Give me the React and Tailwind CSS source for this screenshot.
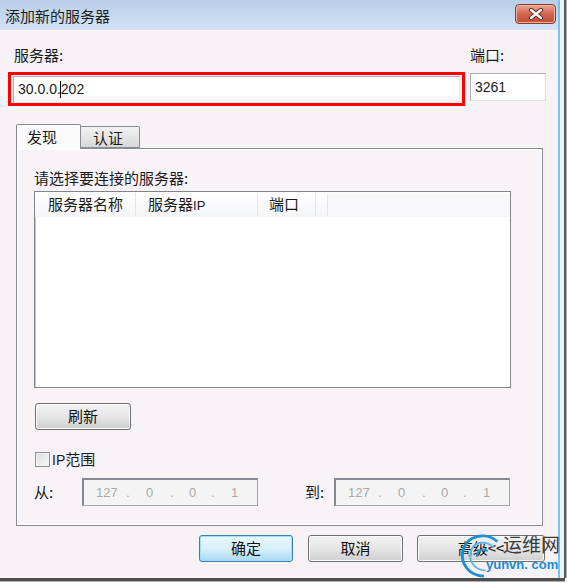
import React from 'react'

const cjk = "font-['Noto_Sans_CJK_SC','Noto_Sans',sans-serif]"
const latin = "font-['Liberation_Sans','Noto_Sans_CJK_SC',sans-serif]"

function Win7Button({ label, width, focused }) {
  return (
    <div
      className={`h-[27px] ${width} rounded-[3px] border flex items-center justify-center text-[15px] text-[#111] ${cjk} ${
        focused
          ? 'border-[#3c7fb1] shadow-[inset_0_0_0_1px_#9ee2f8] bg-gradient-to-b from-[#eaf6fd] via-[#d9f0fc] to-[#a7d9f5]'
          : 'border-[#707070] shadow-[inset_0_0_0_1px_#fbfbfb] bg-gradient-to-b from-[#f2f2f2] via-[#e6e6e6] to-[#cfcfcf]'
      }`}
    >
      {label}
    </div>
  )
}

function IpBox() {
  return (
    <div className={`w-[176px] h-[28px] border border-[#a7a7a7] border-t-[#828790] border-l-[#828790] border-t-2 border-l-2 bg-[#f4f4f4] flex items-center text-[13px] text-[#a9a9a9] ${latin}`}>
      <span className="ml-[12px] w-[30px]">127</span>
      <span className="w-[20px]">.</span>
      <span className="w-[24px]">0</span>
      <span className="w-[19px]">.</span>
      <span className="w-[22px]">0</span>
      <span className="w-[20px]">.</span>
      <span>1</span>
    </div>
  )
}

export default function App() {
  return (
    <div className="w-[567px] h-[583px] bg-white overflow-hidden">
      <div className="flex">
        <div className="w-[558px] h-[578px] bg-[#f6f2f6] flex flex-col">
          {/* Title bar */}
          <div className="h-[30px] bg-gradient-to-b from-[#b8cfe9] to-[#d2e2f3] flex items-start justify-between">
            <span className={`ml-[5px] mt-[5px] text-[15px] text-[#1e1e1e] ${cjk}`}>添加新的服务器</span>
            <div className="mt-[4px] mr-[2px] w-[41px] h-[20px] rounded-[4px] border border-[#8a3a2c] bg-gradient-to-b from-[#e9a594] via-[#d4644c] to-[#c14f36] shadow-[inset_0_0_0_1px_#f0b4a4] flex items-center justify-center">
              <svg width="16" height="12" viewBox="0 0 16 12">
                <path d="M3 2 L13 10 M13 2 L3 10" stroke="#5a2a22" strokeWidth="4.2" strokeLinecap="round" />
                <path d="M3 2 L13 10 M13 2 L3 10" stroke="#ffffff" strokeWidth="2.4" strokeLinecap="round" />
              </svg>
            </div>
          </div>

          {/* Server / port labels */}
          <div className={`mt-[16px] h-[18px] flex items-center text-[15px] text-[#1a1a1a] ${cjk}`}>
            <span className="ml-[14px] w-[456px]">服务器:</span>
            <span>端口:</span>
          </div>

          {/* Inputs */}
          <div className="mt-[8px] flex items-start">
            <div className="ml-[8px] w-[457px] h-[34px] border-[3px] border-[#ff0000] px-[2px] pt-[1px]">
              <div className={`h-[27px] bg-white border border-[#abadb3] border-r-[#e3e9ef] border-b-[#e3e9ef] flex items-center pl-[4px] text-[14px] text-[#1a1a1a] ${latin}`}>
                30.0.0.<span className="inline-block w-[1px] h-[17px] bg-black -ml-[1px]"></span>202
              </div>
            </div>
            <div className={`ml-[5px] mt-[1px] w-[76px] h-[28px] bg-white border border-[#abadb3] border-r-[#dbdfe6] border-b-[#dbdfe6] flex items-center pl-[4px] text-[14px] text-[#1a1a1a] ${latin}`}>
              3261
            </div>
          </div>

          {/* Tabs */}
          <div className={`mt-[17px] ml-[16px] flex items-end h-[25px] text-[15px] text-[#1a1a1a] ${cjk}`}>
            <div className="relative z-10 w-[65px] h-[25px] -mb-[1px] border border-b-0 border-[#898c95] bg-[#fbfbfc] rounded-t-[2px] pl-[10px] leading-[24px]">
              发现
            </div>
            <div className="w-[59px] h-[22px] border border-l-0 border-[#898c95] bg-gradient-to-b from-[#f2f2f2] to-[#d8d8d8] rounded-tr-[2px] pl-[12px] leading-[21px]">
              认证
            </div>
          </div>

          {/* Tab panel */}
          <div className={`ml-[16px] w-[527px] h-[378px] border border-[#898c95] shadow-[inset_0_0_0_1px_#ffffff] bg-[#f7f3f7] pl-[17px] text-[15px] text-[#1a1a1a] ${cjk}`}>
            <div className="mt-[20px] h-[18px] leading-[18px]">请选择要连接的服务器:</div>

            {/* List view */}
            <div className="mt-[4px] w-[477px] h-[197px] border border-[#82848a] bg-white shadow-[inset_1px_1px_0_#c9cbd0]">
              <div className="h-[25px] flex items-center bg-gradient-to-b from-white to-[#f4f5f8]">
                <div className="w-[101px] pl-[13px] border-r border-[#e5e6ea]">服务器名称</div>
                <div className="w-[122px] pl-[12px] border-r border-[#e5e6ea]">
                  服务器<span className={`${latin} text-[13px]`}>IP</span>
                </div>
                <div className="w-[58px] pl-[11px] border-r border-[#e5e6ea]">端口</div>
                <div className="w-[12px] h-[22px] border-r border-[#e5e6ea]"></div>
                <div className="flex-1 h-[22px] bg-[#f8f8fb]"></div>
              </div>
            </div>

            <div className="mt-[15px] ml-[1px]">
              <Win7Button label="刷新" width="w-[96px]" />
            </div>

            {/* IP range */}
            <div className="mt-[21px] ml-[1px] flex items-center h-[16px]">
              <div className="w-[15px] h-[15px] border border-[#8e8f8f] bg-gradient-to-br from-[#dcdcdc] to-[#f8f8f8] shadow-[inset_0_0_0_1px_#f4f4f4]"></div>
              <span className="ml-[2px]">
                <span className={`${latin} text-[14px]`}>IP</span>范围
              </span>
            </div>

            <div className="mt-[11px] flex items-center">
              <span className="w-[48px]">从:</span>
              <IpBox />
              <span className="ml-[47px] w-[29px]">到:</span>
              <IpBox />
            </div>
          </div>

          {/* Bottom buttons */}
          <div className="mt-[9px] flex items-center relative">
            <div className="ml-[199px]">
              <Win7Button label="确定" width="w-[94px]" focused />
            </div>
            <div className="ml-[15px]">
              <Win7Button label="取消" width="w-[95px]" />
            </div>
            <div className="ml-[14px]">
              <Win7Button label="高级<<" width="w-[128px]" />
            </div>

            {/* Watermark */}
            <div className="absolute left-[458px] -top-[3px] w-[100px] h-[46px] pointer-events-none">
              <svg className="absolute left-0 top-0" width="46" height="46" viewBox="0 0 46 48">
                <path d="M40 10 C30 0 8 2 4 20 C1 34 12 46 26 46" fill="none" stroke="#1c8fd0" strokeWidth="3" />
                <path d="M36 16 C28 8 14 10 12 22 C10 32 18 40 28 40" fill="none" stroke="#5fb8e8" strokeWidth="2" />
                <path d="M30 20 C24 16 18 20 19 26" fill="none" stroke="#1c8fd0" strokeWidth="2" />
              </svg>
              <span className={`absolute left-[45px] top-[1px] whitespace-nowrap text-[19px] text-[#3a3a3a] leading-[22px] ${cjk}`}>运维网</span>
              <span className={`absolute left-[28px] top-[25px] whitespace-nowrap text-[13px] font-bold text-[#1a8ad2] leading-[16px] ${latin}`}>yunvn. com</span>
            </div>
          </div>
        </div>
        {/* Right window frame */}
        <div className="flex h-[578px]">
          <div className="w-[2px] bg-[#78c4ee]"></div>
          <div className="w-[4px] bg-[#eef3f8]"></div>
          <div className="w-[2px] bg-[#5a5a5a]"></div>
          <div className="w-[1px] bg-[#b0b0b0]"></div>
        </div>
      </div>
      <div className="w-[565px] h-[3px] bg-[#4e4e4e]"></div>
      <div className="w-[565px] h-[1px] bg-[#b0b0b0]"></div>
    </div>
  )
}
